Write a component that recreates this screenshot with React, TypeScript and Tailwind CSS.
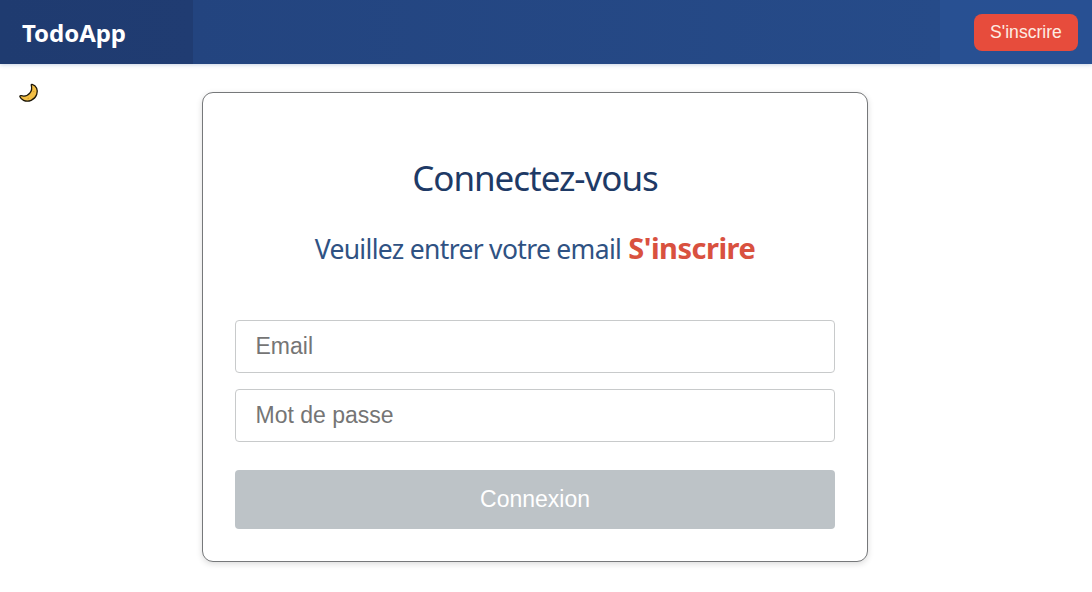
function Moon() {
  return (
    <svg className="block h-5 w-5" viewBox="0 0 20 20" aria-hidden="true">
      <path
        d="M13.1 1.4 C17.4 2.5 19.4 7.1 17.7 11.6 C15.7 17 9.3 19.6 4.6 17.3 C2.6 16.3 1.4 15 .9 13.8 C.7 12.9 1.4 12.5 2.2 12.7 C5.4 13.5 8.9 12.7 11 9.9 C12.8 7.5 13.1 5.2 12.3 2.3 C12.2 1.6 12.5 1.3 13.1 1.4 Z"
        fill="#f3bf45"
        stroke="#1d1708"
        strokeWidth="1.3"
        strokeLinejoin="round"
      />
      <circle cx="14.8" cy="8.6" r=".7" fill="#d99b25" />
      <circle cx="9.2" cy="15.3" r=".8" fill="#d99b25" />
    </svg>
  );
}

export default function App() {
  return (
    <div className="flex h-[592px] flex-col overflow-hidden bg-white font-['Noto_Sans','Open_Sans',sans-serif]">
      <header className="flex h-16 shrink-0 items-center justify-between bg-[linear-gradient(90deg,#1f3b70_0,#203c72_193px,#23447f_193px,#264b89_940px,#285092_940px,#285093_100%)] pl-[22px] pr-3.5 shadow-[0_1px_4px_rgba(42,82,152,0.25)]">
        <span className="pt-0.5 text-[24px] leading-8 font-bold tracking-[-0.05px] text-white">TodoApp</span>
        <button className="h-[37px] w-[104px] rounded-lg bg-[#e74c3c] pt-px font-['Liberation_Sans',Arial,sans-serif] text-[17.6px] text-[#fdece3]">
          S'inscrire
        </button>
      </header>
      <div className="flex pt-7">
        <button className="-mt-[9px] mr-[163px] ml-[19px] h-5 w-5 shrink-0" aria-label="Mode sombre">
          <Moon />
        </button>
        <main className="flex h-[470px] w-[666px] flex-col rounded-[11px] border border-[#76787a] bg-white px-8 pt-[62px] shadow-[0_2px_6px_rgba(0,0,0,0.14)]">
          <h1 className="text-center text-[35px] leading-[46px] whitespace-nowrap text-[#1e3a66]">
            <span className="tracking-[-1.05px]">Connectez-vous</span>
          </h1>
          <p className="mt-6 flex items-baseline justify-center text-[26.5px] leading-[46px] whitespace-nowrap text-[#2f5283]">
            <span className="tracking-[-0.68px]">Veuillez entrer votre email</span>
            <a className="ml-[7px] text-[29px] font-bold tracking-[-0.5px] text-[#d9513f]">S'inscrire</a>
          </p>
          <form className="mt-12 flex flex-col font-['Liberation_Sans',Arial,sans-serif] text-[23px]">
            <input
              type="email"
              placeholder="Email"
              className="h-[53px] w-full rounded-[4px] border border-[#c8cacb] pb-px pl-[19.5px] outline-none placeholder:text-[#757575]"
            />
            <input
              type="password"
              placeholder="Mot de passe"
              className="mt-4 h-[53px] w-full rounded-[4px] border border-[#c8cacb] pb-px pl-[19.5px] outline-none placeholder:text-[#757575]"
            />
            <button type="button" className="mt-7 h-[59px] w-full rounded-[4px] bg-[#bdc3c7] text-white">
              Connexion
            </button>
          </form>
        </main>
      </div>
    </div>
  );
}
